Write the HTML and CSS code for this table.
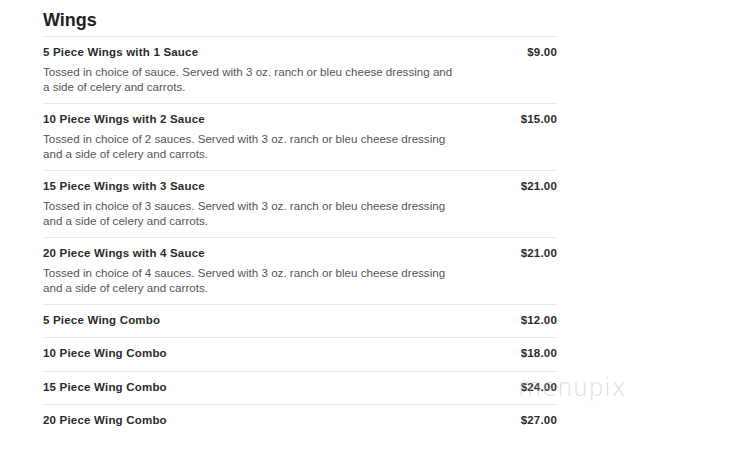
FILE: index.html
```html
<!DOCTYPE html>
<html>
<head>
<meta charset="utf-8">
<link rel="stylesheet" href="styles.css">
</head>
<body>
<div class="menu">
  <h2 class="heading">Wings</h2>
  <div class="item">
    <div class="row"><span class="name">5 Piece Wings with 1 Sauce</span><span class="price">$9.00</span></div>
    <p class="desc">Tossed in choice of sauce. Served with 3 oz. ranch or bleu cheese dressing and a side of celery and carrots.</p>
  </div>
  <div class="item">
    <div class="row"><span class="name">10 Piece Wings with 2 Sauce</span><span class="price">$15.00</span></div>
    <p class="desc">Tossed in choice of 2 sauces. Served with 3 oz. ranch or bleu cheese dressing and a side of celery and carrots.</p>
  </div>
  <div class="item">
    <div class="row"><span class="name">15 Piece Wings with 3 Sauce</span><span class="price">$21.00</span></div>
    <p class="desc">Tossed in choice of 3 sauces. Served with 3 oz. ranch or bleu cheese dressing and a side of celery and carrots.</p>
  </div>
  <div class="item">
    <div class="row"><span class="name">20 Piece Wings with 4 Sauce</span><span class="price">$21.00</span></div>
    <p class="desc">Tossed in choice of 4 sauces. Served with 3 oz. ranch or bleu cheese dressing and a side of celery and carrots.</p>
  </div>
  <div class="item combo">
    <div class="row"><span class="name">5 Piece Wing Combo</span><span class="price">$12.00</span></div>
  </div>
  <div class="item combo">
    <div class="row"><span class="name">10 Piece Wing Combo</span><span class="price">$18.00</span></div>
  </div>
  <div class="item combo">
    <div class="row"><span class="name">15 Piece Wing Combo</span><span class="price">$24.00</span></div>
  </div>
  <div class="item combo">
    <div class="row"><span class="name">20 Piece Wing Combo</span><span class="price">$27.00</span></div>
  </div>
</div>
<div class="watermark">menupix</div>
</body>
</html>
```
FILE: styles.css
```css
html, body {
  margin: 0;
  padding: 0;
  background: #fff;
}
body {
  font-family: "Liberation Sans", Arial, sans-serif;
  color: #333;
  position: relative;
  width: 751px;
  height: 472px;
  overflow: hidden;
}
.menu {
  width: 514px;
  padding: 9px 0 0 43px;
}
.heading {
  margin: 0;
  font-size: 18px;
  line-height: 22px;
  font-weight: bold;
  color: #222;
  padding-bottom: 5px;
}
.item {
  border-top: 1px solid #e8e8e8;
  padding: 8px 0 9px;
}
.combo {
  padding-bottom: 9.4px;
}
.row {
  display: flex;
  justify-content: space-between;
  font-size: 11.5px;
  line-height: 15px;
  font-weight: bold;
  color: #2b2b2b;
  letter-spacing: 0.2px;
}
.desc {
  margin: 4px 0 0;
  max-width: 414px;
  font-size: 11.6px;
  line-height: 15px;
  color: #555;
}
.watermark {
  position: absolute;
  left: 518px;
  top: 374px;
  font-family: "DejaVu Sans", sans-serif;
  font-weight: 200;
  font-size: 24px;
  line-height: 28px;
  color: rgba(185, 185, 185, 0.5);
  letter-spacing: 0.5px;
}
```
